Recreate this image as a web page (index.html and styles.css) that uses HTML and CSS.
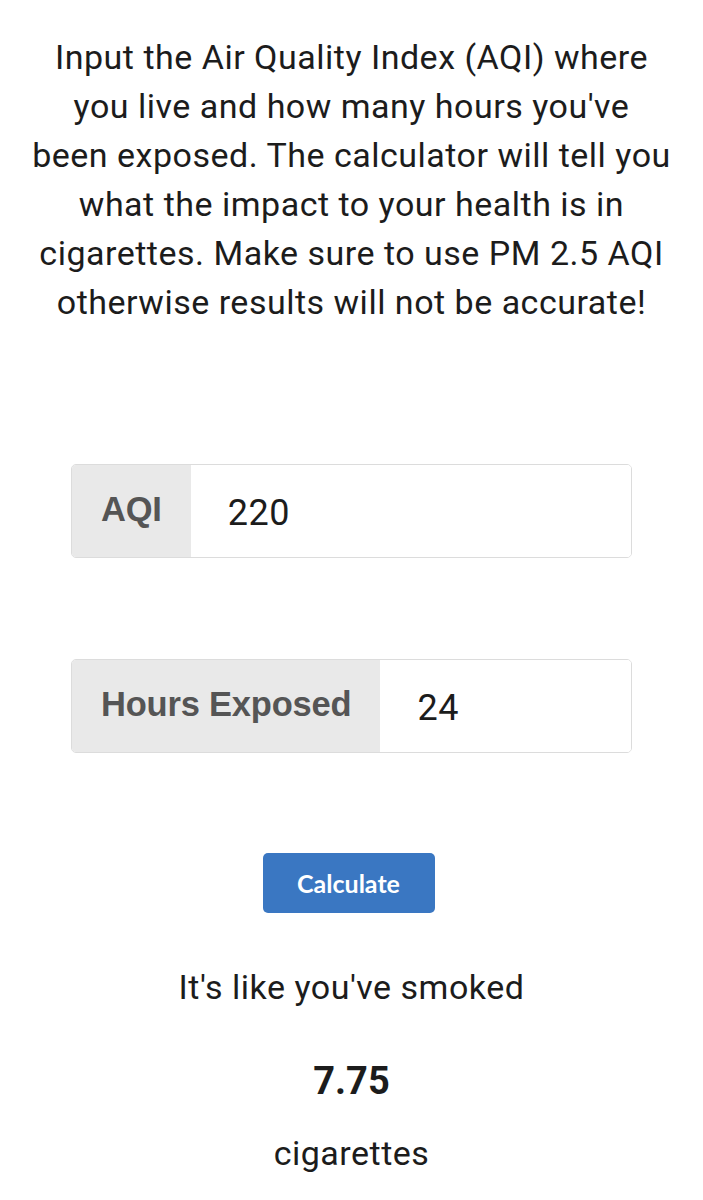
FILE: index.html
```html
<!DOCTYPE html>
<html lang="en">
<head>
  <meta charset="UTF-8">
  <meta name="viewport" content="width=device-width, initial-scale=1.0">
  <title>AQI to Cigarettes</title>
  <link rel="stylesheet" href="styles.css">
</head>
<body>
  <div class="page">
    <p class="intro">Input the Air Quality Index (AQI) where<br>
      you live and how many hours you've<br>
      been exposed. The calculator will tell you<br>
      what the impact to your health is in<br>
      cigarettes. Make sure to use PM 2.5 AQI<br>
      otherwise results will not be accurate!</p>

    <div class="input-group first">
      <span class="label">AQI</span>
      <input type="text" class="field" value="220">
    </div>

    <div class="input-group">
      <span class="label">Hours Exposed</span>
      <input type="text" class="field" value="24">
    </div>

    <div class="actions">
      <button class="btn">Calculate</button>
    </div>

    <p class="result-text lead">It's like you've smoked</p>
    <p class="result-num">7.75</p>
    <p class="result-text unit">cigarettes</p>
  </div>
</body>
</html>
```

FILE: styles.css
```css
body {
  margin: 0;
  background-color: #fff;
  color: #1c1c1c;
  font-family: Roboto, "Noto Sans", sans-serif;
}
.page {
  padding: 33px 30px 0;
  text-align: center;
}
.intro {
  margin: 0;
  font-size: 34px;
  line-height: 49px;
  letter-spacing: 0.5px;
  white-space: nowrap;
}
.input-group {
  display: flex;
  margin: 101px 41px 0;
  height: 94px;
  box-sizing: border-box;
  border-radius: 5px;
  overflow: hidden;
  border: 1px solid #dcdcdc;
}
.input-group.first {
  margin-top: 137px;
}
.input-group .label {
  display: flex;
  align-items: center;
  padding: 0 29px 4px;
  background-color: #e9e9e9;
  color: #555;
  font-family: "Liberation Sans", Arial, sans-serif;
  font-weight: bold;
  font-size: 34.5px;
  letter-spacing: -0.2px;
}
.input-group .field {
  flex: 1;
  min-width: 0;
  border: none;
  padding: 4px 37px 0;
  font-family: Roboto, sans-serif;
  font-size: 36px;
  letter-spacing: 0.5px;
  color: #1c1c1c;
  outline: none;
}
.actions {
  margin-top: 100px;
  padding-right: 6px;
}
.btn {
  width: 172px;
  height: 60px;
  border: none;
  border-radius: 5px;
  background-color: #3a77c2;
  color: #fff;
  font-family: Lato, sans-serif;
  font-weight: bold;
  font-size: 25px;
}
.result-text {
  margin: 0;
  font-size: 34px;
  line-height: 40px;
  letter-spacing: 0.5px;
}
.lead {
  margin-top: 54px;
}
.result-num {
  margin: 49px 0 0;
  font-family: Roboto, sans-serif;
  font-weight: bold;
  font-size: 38px;
  line-height: 50px;
}
.unit {
  margin-top: 27px;
}
```
